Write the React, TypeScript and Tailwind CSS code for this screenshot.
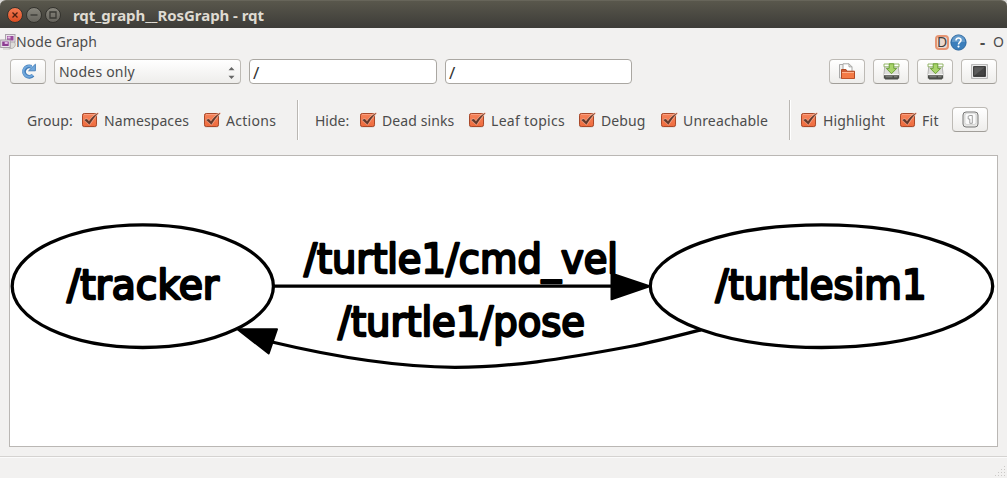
import type { ReactNode } from "react";

function Check({ label, width, tracking }: { label: string; width: string; tracking: string }) {
  return (
    <label className={`flex shrink-0 items-center gap-[5px] ${width}`}>
      <svg width="17" height="17" viewBox="0 0 17 17" className="shrink-0">
        <rect x="-0.3" y="2.5" width="15.4" height="14" rx="2.5" fill="#d3cfcb" />
        <rect x="0.5" y="2.5" width="14" height="13" rx="1.8" fill="url(#checkFill)" stroke="#a9492a" />
        <path d="M2 3.5h11" stroke="#fba183" strokeWidth="0.9" />
        <path d="M2.4 9 L4.8 8 L7 10.6 C9.4 7 12 4.2 16 2.2 C12.8 5.6 10 9 7.4 13.6 Z" fill="#6a3525" stroke="#ffb79c" strokeWidth="1.4" strokeLinejoin="round" />
        <path d="M2.4 9 L4.8 8 L7 10.6 C9.4 7 12 4.2 16 2.2 C12.8 5.6 10 9 7.4 13.6 Z" fill="#64392b" stroke="#64392b" strokeWidth="0.4" />
      </svg>
      <span className={`pt-[2px] whitespace-nowrap ${tracking}`}>{label}</span>
    </label>
  );
}

function ToolButton({ children }: { children: ReactNode }) {
  return (
    <button className="flex h-[25px] w-9 shrink-0 items-center justify-center rounded-[4px] border border-[#bdbab5] border-b-[#a19e99] bg-linear-to-b from-white to-[#eeedeb]">
      {children}
    </button>
  );
}

function SaveIcon() {
  return (
    <svg width="17" height="17" viewBox="0 0 17 17">
      <path d="M2 1.5h13l1 9v5H1v-5z" fill="#dededc" stroke="#a5a5a2" strokeWidth="0.8" />
      <path d="M1 11h15v1.2H1z" fill="#f3f3f2" />
      <path d="M1 12.2h15v2.3l-1.2 1.9H2.2L1 14.5z" fill="#4b4d49" />
      <path d="M2.5 13.8h7M11 13.8h3.5" stroke="#8d8f8a" strokeWidth="1" />
      <path d="M1 1h15v2.8H1z" fill="#fff" stroke="#7ba648" strokeWidth="0.8" />
      <path d="M6.2 .8h4.6v4.6h2.9L8.5 10.7 3.3 5.4h2.9z" fill="#a8d46a" stroke="#659b30" strokeWidth="0.9" />
    </svg>
  );
}

function Separator() {
  return <div className="mt-px h-10 w-[2px] shrink-0 border-l border-[#bab7b3] bg-white" />;
}

function WindowButton({ close, children }: { close?: boolean; children: ReactNode }) {
  return (
    <span
      className={`flex size-[16px] items-center justify-center rounded-full border border-[#34332e] ${
        close ? "bg-linear-to-b from-[#f47b52] to-[#db4c20]" : "bg-linear-to-b from-[#87857c] to-[#66645d]"
      }`}
    >
      <svg width="10" height="10" viewBox="0 0 10 10" fill="none" stroke={close ? "#4b1f10" : "#393833"} strokeWidth="1.3">
        {children}
      </svg>
    </span>
  );
}

export default function App() {
  return (
    <div className="flex h-[478px] w-[1007px] flex-col overflow-hidden bg-[#f2f1f0] font-['Noto_Sans','Open_Sans',sans-serif] text-[14px] leading-5 text-[#4c4c4c]">
      <svg width="0" height="0" className="absolute">
        <defs>
          <linearGradient id="checkFill" x1="0" y1="0" x2="0" y2="1">
            <stop offset="0" stopColor="#f5845c" />
            <stop offset="1" stopColor="#ef6b3d" />
          </linearGradient>
        </defs>
      </svg>
      <header className="h-7 shrink-0 bg-[#d9d8d6]">
        <div className="flex h-7 items-center rounded-t-[6px] border-t border-[#67655a] bg-linear-to-b from-[#59574c] to-[#3d3c38] pl-[7px]">
          <div className="flex gap-[3px]">
            <WindowButton close><path d="M2.5 2.5l5 5M7.5 2.5l-5 5" /></WindowButton>
            <WindowButton><path d="M1.5 5h7" /></WindowButton>
            <WindowButton><path d="M2 2h6v6H2z" /></WindowButton>
          </div>
          <h1 className="ml-[12px] mt-px text-[15px] font-bold tracking-[-0.05px] whitespace-nowrap text-[#dfdbd2]">rqt_graph__RosGraph - rqt</h1>
        </div>
      </header>

      <div className="flex h-[28px] shrink-0 items-center">
        <svg width="16" height="16" viewBox="0 0 16 16" className="shrink-0">
          <ellipse cx="11" cy="10.5" rx="4.3" ry="4" fill="#deddda" stroke="#b5b3b0" />
          <rect x="5.5" y=".5" width="9.5" height="7.5" fill="#e9e3ea" stroke="#aaa2ab" />
          <rect x="7" y="2" width="6.5" height="4.5" fill="#97479b" />
          <path d="M7.5 2.5h3v2h-3z" fill="#e5c2e6" />
          <rect x=".7" y="6" width="9.5" height="7.5" fill="#e9e3ea" stroke="#a59da6" />
          <rect x="2.2" y="7.5" width="6.5" height="4.5" fill="#8c3c92" />
          <path d="M4.7 8h3v2h-3z" fill="#e1b8e3" />
          <path d="M3 15h7" stroke="#c5c3c1" fill="none" />
        </svg>
        <span className="tracking-[0.1px] whitespace-nowrap">Node Graph</span>
        <div className="ml-auto flex items-center">
          <span className="flex h-[15px] w-[14px] items-center justify-center rounded-[4px] border-2 border-[#e69573] bg-[#ead8cf] text-[14px] text-[#3f3f3f]">D</span>
          <svg width="17" height="17" viewBox="0 0 17 17" className="ml-px">
            <circle cx="8.5" cy="8.5" r="7.6" fill="#3c7ebb" stroke="#28649d" />
            <path d="M1.8 8A6.7 6.7 0 0 1 15.2 8z" fill="#659bcb" />
            <path d="M6 6.4C6 3.2 11.2 3.4 11 6.3 10.9 8.2 8.5 8 8.5 10.4" fill="none" stroke="#fff" strokeWidth="1.6" />
            <circle cx="8.5" cy="12.6" r="1.1" fill="#fff" />
          </svg>
          <span className="ml-[13px] w-[13px] text-[16px] font-bold">-</span>
          <span className="w-[14px]">O</span>
        </div>
      </div>

      <div className="flex h-[31px] shrink-0 items-center gap-2 px-[10px]">
        <ToolButton>
          <svg width="17" height="17" viewBox="0 0 17 17" fill="none">
            <path d="M13 12.2A5.2 5.2 0 1 1 11.3 3.8" stroke="#3f7ab6" strokeWidth="3.8" />
            <path d="M15.4 1.2v6.6H8.6z" fill="#70a7dc" stroke="#3f7ab6" strokeWidth=".9" />
            <path d="M12.6 11.9A5.2 5.2 0 1 1 11.9 4.3" stroke="#70a7dc" strokeWidth="2.2" />
          </svg>
        </ToolButton>
        <div className="flex h-[25px] w-[187px] shrink-0 items-center justify-between rounded-[4px] border border-[#bdbab5] border-b-[#a19e99] bg-linear-to-b from-white to-[#eeedeb] pr-[5px] pl-[4px]">
          <span className="tracking-[0.2px]">Nodes only</span>
          <svg width="7" height="14" viewBox="0 0 7 14" className="mt-[3px]">
            <path d="M3.5 1L6.5 4.3h-6zM3.5 13L6.5 9.7h-6z" fill="#666" />
          </svg>
        </div>
        <div className="h-[25px] w-[188px] shrink-0 rounded-[4px] border border-[#aaa7a2] bg-white px-[3px] text-[17px] leading-[25px] text-[#333]">/</div>
        <div className="h-[25px] w-[187px] shrink-0 rounded-[4px] border border-[#aaa7a2] bg-white px-[3px] text-[17px] leading-[25px] text-[#333]">/</div>
        <div className="ml-auto flex gap-2">
          <ToolButton>
            <svg width="18" height="17" viewBox="0 0 18 17">
              <path d="M1.5 1.5h6V15h-6z" fill="#efefee" stroke="#aaa" />
              <path d="M5 .8h6l3 3V9H5z" fill="#fff" stroke="#a5a5a3" />
              <path d="M11 .8v3h3" fill="none" stroke="#a5a5a3" />
              <path d="M3.5 15.5V6.5h4.5l1 1.7h7.5v7.3z" fill="#cf5a31" stroke="#b24a24" />
              <path d="M4 9.5h12v5.7H4z" fill="#f47a45" />
              <path d="M4 9.5h12" stroke="#ffb38d" />
            </svg>
          </ToolButton>
          <ToolButton><SaveIcon /></ToolButton>
          <ToolButton><SaveIcon /></ToolButton>
          <ToolButton>
            <svg width="17" height="15" viewBox="0 0 17 15">
              <rect x=".7" y=".7" width="15.6" height="13.6" fill="#fafafa" stroke="#aaa" />
              <rect x="2.7" y="2.7" width="11.6" height="9.6" fill="#444" stroke="#222" />
              <path d="M3.2 11.8V3.2h10.6z" fill="#5c5c5c" />
            </svg>
          </ToolButton>
        </div>
      </div>

      <div className="mb-[3px] flex h-[65px] shrink-0 items-center pl-[27px]">
        <span className="w-[55px] shrink-0 pt-[2px] tracking-[0.1px]">Group:</span>
        <Check label="Namespaces" width="w-[122px]" tracking="tracking-[0.1px]" />
        <Check label="Actions" width="w-[93px]" tracking="tracking-[0.3px]" />
        <Separator />
        <span className="ml-[16px] w-[45px] shrink-0 pt-[2px]">Hide:</span>
        <Check label="Dead sinks" width="w-[109px]" tracking="tracking-[0.1px]" />
        <Check label="Leaf topics" width="w-[110px]" tracking="tracking-[0.3px]" />
        <Check label="Debug" width="w-[82px]" tracking="tracking-[0.1px]" />
        <Check label="Unreachable" width="w-[128px]" tracking="tracking-[0.15px]" />
        <Separator />
        <div className="w-[10px] shrink-0" />
        <Check label="Highlight" width="w-[99px]" tracking="tracking-[0.15px]" />
        <Check label="Fit" width="w-[52px]" tracking="tracking-[0.3px]" />
        <ToolButton>
          <svg width="17" height="17" viewBox="0 0 17 17">
            <rect x="1" y="1" width="15" height="15" rx="3" fill="#e6e6e4" stroke="#777" />
            <rect x="3" y="2.2" width="11" height="11.3" rx="2" fill="#fafafa" stroke="#ccc" strokeWidth=".7" />
            <path d="M6.2 5.2L8 4.5h2.3v7.8H7.8V8H6.2z" fill="#fff" stroke="#888" strokeWidth=".8" />
          </svg>
        </ToolButton>
      </div>

      <main className="mx-[9px] h-[292px] shrink-0 border border-[#bab7b4] bg-white">
        <svg width="987" height="290" viewBox="10 156 987 290" className="block font-['DejaVu_Sans',sans-serif]">
          <g fill="none" stroke="#000" strokeWidth="3.3">
            <ellipse cx="142.8" cy="286.2" rx="130.6" ry="61.3" />
            <ellipse cx="821.5" cy="286.2" rx="171.2" ry="61.3" />
            <path d="M273 286.2H612" />
            <path d="M701 329.8C677 336 654 342 630 346.5C560 359.5 510 367.3 455 367.3C395 367 337 357.5 272 342" />
          </g>
          <path d="M611.5 273.5L649.5 286.2L611.5 299.3zM237.5 329.2L277 329.2L268.7 353.5z" stroke="#000" strokeWidth="2" strokeLinejoin="round" />
          <g fontSize="40" stroke="#000" strokeWidth="2.4" strokeLinejoin="round">
            <text x="67" y="299" textLength="152" lengthAdjust="spacingAndGlyphs">/tracker</text>
            <text x="715.5" y="299" textLength="211" lengthAdjust="spacingAndGlyphs">/turtlesim1</text>
            <text x="304" y="272.8" textLength="314" lengthAdjust="spacingAndGlyphs">/turtle1/cmd_vel</text>
            <text x="338" y="335.8" textLength="247" lengthAdjust="spacingAndGlyphs">/turtle1/pose</text>
          </g>
        </svg>
      </main>

      <footer className="mt-[9px] flex flex-1 items-end justify-end border-t border-[#d5d3d1] pr-px pb-px shadow-[inset_0_1px_0_#fbfbfb]">
        <svg width="12" height="12" viewBox="0 0 12 12">
          <path d="M10 1.5h1M10 4.5h1M7 4.5h1M10 7.5h1M7 7.5h1M4 7.5h1M10 10.5h1M7 10.5h1M4 10.5h1M1 10.5h1" stroke="#cbc9c7" />
        </svg>
      </footer>
    </div>
  );
}
